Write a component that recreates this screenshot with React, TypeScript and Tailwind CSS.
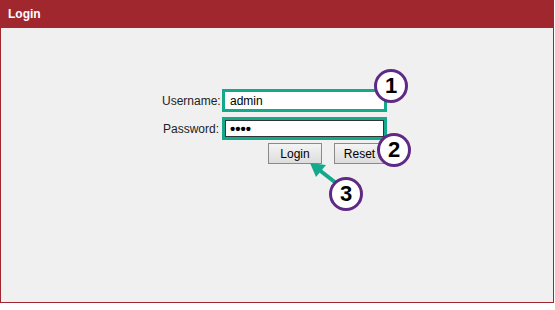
import React from "react";

const font = { fontFamily: '"Liberation Sans", Arial, sans-serif' };

function Marker({ n, className }: { n: string; className: string }) {
  return (
    <div
      className={`absolute w-[34px] h-[34px] rounded-full bg-white border-[3px] border-[#5e2a86] flex items-center justify-center text-[22px] font-bold text-black leading-none ${className}`}
      style={font}
    >
      {n}
    </div>
  );
}

export default function App() {
  return (
    <div className="relative w-[555px] h-[310px] bg-white" style={font}>
      <div className="w-[554px]">
        <div className="h-[28px] bg-[#a1272f] flex items-center pl-[8px]">
          <span className="text-white font-bold text-[12px]">Login</span>
        </div>
        <div className="h-[275px] bg-[#f0f0f0] border-x border-b border-[#a1272f] pt-[61px] pl-[161px]">
          <div className="flex flex-col gap-[5px]">
            <div className="flex items-center">
              <label className="w-[60px] text-right pr-[3px] text-[12px] text-[#222]">Username:</label>
              <div className="w-[165px] h-[23px] border-[3px] border-[#14a98b]">
                <div className="h-full bg-white flex items-center pl-[5px] text-[12px] text-black">admin</div>
              </div>
            </div>
            <div className="flex items-center">
              <label className="w-[60px] text-right pr-[3px] text-[12px] text-[#222]">Password:</label>
              <div className="w-[165px] h-[23px] border-[3px] border-[#14a98b]">
                <div className="h-full bg-white border border-[#333] flex items-center pl-[4px] text-[15px] font-bold text-black leading-none">
                  ••••
                </div>
              </div>
            </div>
          </div>
          <div className="flex gap-[12px] mt-[3px] ml-[106px]">
            <button className="w-[54px] h-[21px] border border-[#8a8a8a] bg-gradient-to-b from-[#f4f4f4] to-[#dddddd] text-[12px] text-black">
              Login
            </button>
            <button className="w-[51px] h-[21px] border border-[#8a8a8a] bg-gradient-to-b from-[#f4f4f4] to-[#dddddd] text-[12px] text-black">
              Reset
            </button>
          </div>
        </div>
      </div>

      <svg className="absolute left-0 top-0 pointer-events-none" width="555" height="310">
        <line x1="336" y1="183" x2="318" y2="169" stroke="#14a98b" strokeWidth="4" />
        <polygon points="310,163 326,165 316,177" fill="#14a98b" />
      </svg>
      <Marker n="1" className="left-[374px] top-[69px]" />
      <Marker n="2" className="left-[377px] top-[133px]" />
      <Marker n="3" className="left-[329px] top-[177px]" />
    </div>
  );
}
